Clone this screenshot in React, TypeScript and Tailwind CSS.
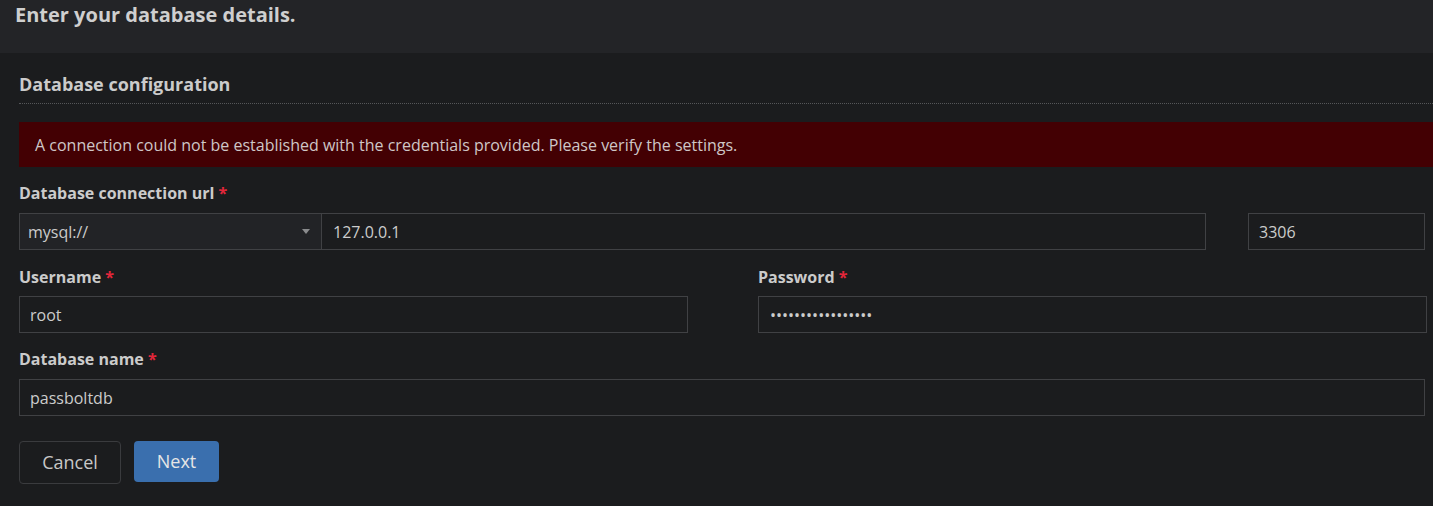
import React from 'react';

function Label({ text }: { text: string }) {
  return (
    <label className="block text-[16px] leading-[22px] font-bold text-[#cbcbcb]">
      {text} <span className="text-[#e3263a]">*</span>
    </label>
  );
}

export default function App() {
  return (
    <div className="min-h-[506px] w-[1433px] overflow-hidden bg-[#1b1c1e] text-[#cccccc]" style={{ fontFamily: '"Open Sans", "Liberation Sans", sans-serif' }}>
      {/* Header */}
      <div className="h-[53px] bg-[#232427] pl-[15px] pt-[3px]">
        <h1 className="text-[20px] leading-[24px] font-bold text-[#cfcfcf]">Enter your database details.</h1>
      </div>

      <div className="pl-[19px] pt-[19px]">
        {/* Section title */}
        <div className="w-[1500px] border-b border-dotted border-[#555659] pb-[7px]">
          <h2 className="text-[18px] leading-[24px] font-bold text-[#cbcbcb]">Database configuration</h2>
        </div>

        {/* Error */}
        <div className="mt-[18px] flex h-[45px] w-[1500px] items-center bg-[#430003] pl-[16px] text-[16px] text-[#cfc7c7]">
          A connection could not be established with the credentials provided. Please verify the settings.
        </div>

        <div className="w-[1408px]">
          {/* URL */}
          <div className="mt-[15px]">
            <Label text="Database connection url" />
            <div className="mt-[9px] flex">
              <div className="flex h-[37px] w-[303px] items-center justify-between border border-[#404144] bg-[#222326] pl-[8px] pr-[11px] text-[16px] text-[#cccccc]">
                <span>mysql://</span>
                <svg width="8" height="5" viewBox="0 0 8 5"><path d="M0 0h8L4 5z" fill="#8a8b8d" /></svg>
              </div>
              <div className="flex h-[37px] w-[884px] items-center border border-l-0 border-[#404144] pl-[11px] text-[16px]">127.0.0.1</div>
              <div className="ml-[42px] flex h-[37px] w-[177px] items-center border border-[#404144] pl-[10px] text-[16px]">3306</div>
            </div>
          </div>

          {/* Username / Password */}
          <div className="mt-[16px] flex gap-[70px]">
            <div className="w-[669px]">
              <Label text="Username" />
              <div className="mt-[8px] flex h-[37px] items-center border border-[#404144] pl-[10px] text-[16px]">root</div>
            </div>
            <div className="w-[669px]">
              <Label text="Password" />
              <div className="mt-[8px] flex h-[37px] items-center border border-[#404144] pl-[11px] text-[16px]">
                •••••••••••••••••
              </div>
            </div>
          </div>

          {/* Database name */}
          <div className="mt-[15px] w-[1406px]">
            <Label text="Database name" />
            <div className="mt-[9px] flex h-[37px] items-center border border-[#404144] pl-[10px] text-[16px]">passboltdb</div>
          </div>

          {/* Actions */}
          <div className="mt-[25px] flex gap-[13px]">
            <button className="h-[43px] w-[102px] rounded-[4px] border border-[#3a3b3e] text-[18px] text-[#c8c8c8]">Cancel</button>
            <button className="h-[41px] w-[85px] rounded-[4px] bg-[#3a6fae] text-[18px] text-[#e6e6e6]">Next</button>
          </div>
        </div>
      </div>
    </div>
  );
}
